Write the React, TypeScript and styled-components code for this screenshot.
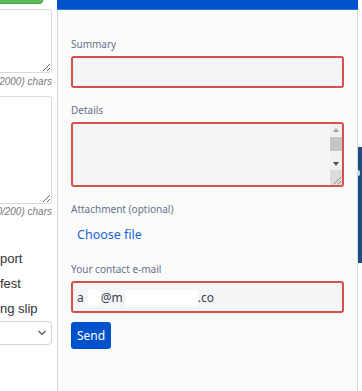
import React from "react";
import styled, { createGlobalStyle } from "styled-components";

const GlobalStyle = createGlobalStyle`
	html, body {
		margin: 0;
		padding: 0;
		background: #fff;
	}
	body {
		width: 362px;
		height: 391px;
		overflow: hidden;
		font-family: "Liberation Sans", Arial, sans-serif;
	}
`;

const Page = styled.div`
	display: flex;
	width: 362px;
	height: 391px;
	overflow: hidden;
`;

/* the page behind the panel, mostly cut off on the left */
const BackColumn = styled.div`
	flex: none;
	width: 52px;
	margin-right: 5px;
	display: flex;
	flex-direction: column;
	align-items: flex-end;
	overflow: hidden;
`;

const BackForm = styled.div`
	flex: none;
	width: 240px;
	display: flex;
	flex-direction: column;
	align-items: flex-end;
`;

const GreenButton = styled.div`
	width: 120px;
	height: 4px;
	margin-right: 9px;
	box-sizing: border-box;
	background: #5cb85c;
	border: 1px solid #46a046;
	border-top: none;
	border-radius: 0 0 4px 4px;
`;

interface BackTextareaProps {
	$height: number;
}

const BackTextarea = styled.textarea<BackTextareaProps>`
	display: block;
	width: 100%;
	height: ${({ $height }) => $height}px;
	box-sizing: border-box;
	border: 1px solid #d9d9d9;
	border-radius: 3px;
	background: #fff;
	resize: vertical;
	font: 13px "Liberation Sans", Arial, sans-serif;
	outline: none;
`;

const CharCount = styled.div`
	width: 100%;
	text-align: right;
	font-size: 10px;
	font-style: italic;
	line-height: 16px;
	color: #7a7a7a;
	white-space: nowrap;
`;

const OptionList = styled.div`
	width: 52px;
	margin-top: 26px;
	display: flex;
	flex-direction: column;
`;

const OptionText = styled.div`
	font-size: 13px;
	line-height: 25px;
	color: #333;
	white-space: nowrap;
`;

const BackSelect = styled.div`
	width: 100%;
	height: 24px;
	box-sizing: border-box;
	border: 1px solid #d4d4d4;
	border-radius: 4px;
	background: #fff;
	display: flex;
	align-items: center;
	justify-content: flex-end;
	padding-right: 4px;
`;

/* feedback panel */
const Panel = styled.aside`
	flex: none;
	width: 301px;
	display: flex;
	flex-direction: column;
`;

const PanelHeader = styled.div`
	height: 9px;
	background: #0052cc;
	border-bottom: 1px solid #3477dc;
`;

const PanelBody = styled.div`
	flex: 1;
	background: #fafbfb;
	border-left: 1px solid #d6d9dd;
	border-right: 1px solid #d6d9dd;
	padding: 26px 13px 0;
	display: flex;
	flex-direction: column;
`;

interface FieldProps {
	$gap?: number;
}

const Field = styled.div<FieldProps>`
	display: flex;
	flex-direction: column;
	margin-bottom: ${({ $gap }) => $gap ?? 14}px;
`;

const Label = styled.label`
	font-family: "Noto Sans", "Open Sans", sans-serif;
	font-size: 10px;
	line-height: 16px;
	color: #67728a;
	margin-bottom: 4px;
`;

const TextInput = styled.div`
	height: 32px;
	box-sizing: border-box;
	border: 2px solid #d3534b;
	border-radius: 3px;
	background: #f4f5f7;
	padding: 0 4px;
	display: flex;
	align-items: center;
	font-family: "Noto Sans", "Open Sans", sans-serif;
	font-size: 12px;
	color: #3d4249;
	white-space: pre;
`;

const TextArea = styled.div`
	height: 65px;
	box-sizing: border-box;
	border: 2px solid #d3534b;
	border-radius: 3px;
	background: #f4f5f7;
	display: flex;
	justify-content: flex-end;
`;

const ScrollBar = styled.div`
	width: 12px;
	display: flex;
	flex-direction: column;
	background: #f1f1f1;
`;

const ScrollButton = styled.div`
	height: 12px;
	display: flex;
	align-items: center;
	justify-content: center;
`;

interface ArrowProps {
	$up?: boolean;
}

const Arrow = styled.div<ArrowProps>`
	width: 0;
	height: 0;
	border-left: 3.5px solid transparent;
	border-right: 3.5px solid transparent;
	${({ $up }) =>
		$up
			? "border-bottom: 4px solid #a3a3a3;"
			: "border-top: 4px solid #505050;"}
`;

const Thumb = styled.div`
	height: 14px;
	margin: 1px 0 0;
	background: #c6c6c6;
`;

const Track = styled.div`
	flex: 1;
`;

const Resizer = styled.div`
	height: 15px;
	background: #dcdcdc;
	display: flex;
	align-items: flex-end;
	justify-content: flex-end;
`;

const ChooseFile = styled.span`
	margin: 4px 0 16px 6px;
	font-family: "Noto Sans", "Open Sans", sans-serif;
	font-size: 12.5px;
	line-height: 20px;
	color: #1b63d6;
`;

interface RedactProps {
	$width: number;
	$left: number;
	$shift?: number;
}

const Redact = styled.span<RedactProps>`
	display: inline-block;
	width: ${({ $width }) => $width}px;
	height: 17px;
	margin-left: ${({ $left }) => $left}px;
	position: relative;
	top: ${({ $shift }) => $shift ?? 0}px;
	background: #fff;
`;

const SendButton = styled.button`
	align-self: flex-start;
	width: 40px;
	height: 27px;
	margin-top: 9px;
	padding: 0;
	border: none;
	border-radius: 3px;
	background: #0052cc;
	color: #fff;
	font-family: "Noto Sans", "Open Sans", sans-serif;
	font-size: 12px;
`;

/* tab of another widget peeking out on the right */
const SideStrip = styled.div`
	flex: 1;
	background: #fff;
	display: flex;
	flex-direction: column;
`;

const SideTab = styled.div`
	margin-top: 147px;
	height: 116px;
	background: #1e4e7f;
	display: flex;
	flex-direction: column;
`;

const TabNotch = styled.div`
	width: 2px;
	height: 6px;
	margin-top: 23px;
	background: #c9d3de;
	border-radius: 0 2px 2px 0;
`;

const Grip: React.FC = () => (
	<svg width="10" height="10" viewBox="0 0 10 10">
		<path d="M9 2 L2 9 M9 6 L6 9" stroke="#8a8a8a" strokeWidth="1" />
	</svg>
);

const Chevron: React.FC = () => (
	<svg width="10" height="6" viewBox="0 0 10 6">
		<path d="M1.5 1 L5 4.5 L8.5 1" fill="none" stroke="#555" strokeWidth="1.2" />
	</svg>
);

const App: React.FC = () => {
	return (
		<Page>
			<GlobalStyle />
			<BackColumn>
				<BackForm>
					<GreenButton />
					<BackTextarea $height={64} readOnly style={{ marginTop: 5 }} />
					<CharCount style={{ margin: "1px 0 6px" }}>(0/2000) chars</CharCount>
					<BackTextarea $height={108} readOnly />
					<CharCount>(0/200) chars</CharCount>
					<OptionList>
						<OptionText>port</OptionText>
						<OptionText>fest</OptionText>
						<OptionText>ng slip</OptionText>
					</OptionList>
					<BackSelect>
						<Chevron />
					</BackSelect>
				</BackForm>
			</BackColumn>

			<Panel>
				<PanelHeader />
				<PanelBody>
					<Field>
						<Label>Summary</Label>
						<TextInput />
					</Field>
					<Field>
						<Label>Details</Label>
						<TextArea>
							<ScrollBar>
								<ScrollButton>
									<Arrow $up />
								</ScrollButton>
								<Thumb />
								<Track />
								<ScrollButton>
									<Arrow />
								</ScrollButton>
								<Resizer>
									<Grip />
								</Resizer>
							</ScrollBar>
						</TextArea>
					</Field>
					<Field $gap={0}>
						<Label>Attachment (optional)</Label>
						<ChooseFile>Choose file</ChooseFile>
					</Field>
					<Field $gap={0}>
						<Label>Your contact e-mail</Label>
						<TextInput>
							a<Redact $width={13} $left={4} />@m
							<Redact $width={73} $left={2} $shift={1} />.co
						</TextInput>
					</Field>
					<SendButton>Send</SendButton>
				</PanelBody>
			</Panel>

			<SideStrip>
				<SideTab>
					<TabNotch />
				</SideTab>
			</SideStrip>
		</Page>
	);
};

export default App;
